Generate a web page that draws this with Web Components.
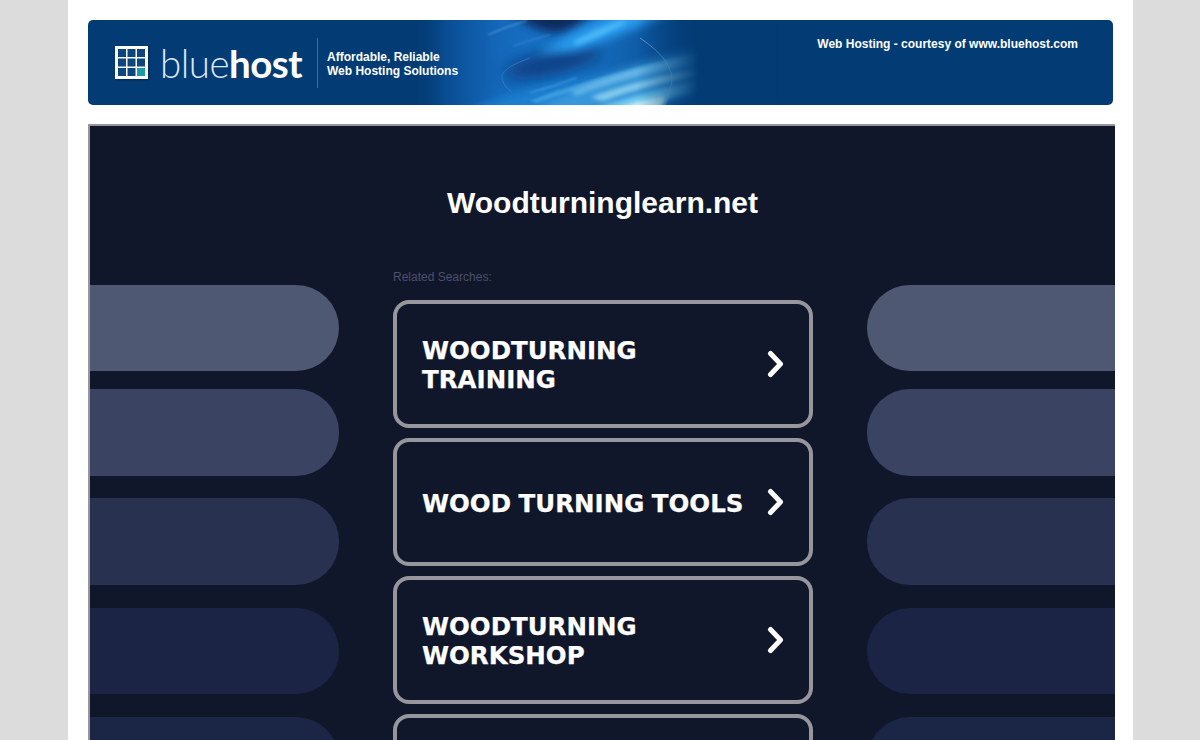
<!DOCTYPE html>
<html>
<head>
<meta charset="utf-8">
<title>Woodturninglearn.net</title>
<style>
  html, body { margin: 0; height: 740px; overflow: hidden; background: #dcdcdc; }
</style>
</head>
<body>
<hosting-page>
  <bluehost-banner></bluehost-banner>
  <parked-frame title-text="Woodturninglearn.net">
    <search-link>WOODTURNING TRAINING</search-link>
    <search-link>WOOD TURNING TOOLS</search-link>
    <search-link>WOODTURNING WORKSHOP</search-link>
    <search-link></search-link>
  </parked-frame>
</hosting-page>

<script>
class HostingPage extends HTMLElement {
  constructor() {
    super();
    this.attachShadow({ mode: "open" });
    this.shadowRoot.innerHTML = `
      <style>
        :host {
          display: flex;
          flex-direction: column;
          box-sizing: border-box;
          width: 1065px;
          height: 740px;
          margin-left: 68px;
          padding: 20px 0 0 20px;
          background: #fff;
          overflow: hidden;
        }
      </style>
      <slot></slot>
    `;
  }
}

class BluehostBanner extends HTMLElement {
  constructor() {
    super();
    this.attachShadow({ mode: "open" });
    this.shadowRoot.innerHTML = `
      <style>
        :host {
          display: flex;
          position: relative;
          flex: none;
          box-sizing: border-box;
          width: 1025px;
          height: 85px;
          border-radius: 5px;
          overflow: hidden;
          background: #033b74;
          font-family: "Liberation Sans", Arial, sans-serif;
          color: #fff;
        }
        .art { position: absolute; left: 0; top: 0; }
        .logo {
          position: relative;
          display: flex;
          align-items: center;
          gap: 12px;
          width: 202px;
          height: 85px;
          padding-left: 27px;
          flex: none;
        }
        .logo svg { filter: drop-shadow(1px 1px 1px rgba(0, 20, 50, .6)); }
        .word {
          font-family: Lato, sans-serif;
          font-size: 38.5px;
          font-weight: 300;
          letter-spacing: -0.5px;
          color: #dce8f2;
          line-height: 1;
          margin-top: 2px;
        }
        .word b { font-weight: 700; color: #fff; }
        .rule {
          position: relative;
          flex: none;
          width: 1px;
          height: 50px;
          margin: 18px 0 0 0;
          background: #3a6f9f;
        }
        .tag {
          position: relative;
          margin: 30px 0 0 9px;
          font-size: 12px;
          font-weight: 700;
          line-height: 14px;
        }
        .courtesy {
          position: absolute;
          right: 35px;
          top: 17px;
          font-size: 12px;
          font-weight: 700;
          line-height: 14px;
        }
      </style>
      <svg class="art" width="1025" height="85" viewBox="0 0 1025 85" aria-hidden="true">
        <defs>
          <linearGradient id="base" x1="0" x2="1" y1="0" y2="0">
            <stop offset="0" stop-color="#033b74"/>
            <stop offset=".14" stop-color="#0a5098"/>
            <stop offset=".3" stop-color="#1468ba"/>
            <stop offset=".55" stop-color="#1a78cc"/>
            <stop offset=".8" stop-color="#0d56a0"/>
            <stop offset="1" stop-color="#033b74"/>
          </linearGradient>
          <linearGradient id="fadeR" x1="0" x2="1" y1="0" y2="0">
            <stop offset="0" stop-color="#033b74" stop-opacity="0"/>
            <stop offset=".85" stop-color="#033b74"/>
          </linearGradient>
          <linearGradient id="fadeL" x1="0" x2="1" y1="0" y2="0">
            <stop offset="0" stop-color="#033b74"/>
            <stop offset="1" stop-color="#033b74" stop-opacity="0"/>
          </linearGradient>
          <filter id="b22" x="-40%" y="-80%" width="180%" height="260%"><feGaussianBlur stdDeviation="22"/></filter>
          <filter id="b14" x="-40%" y="-80%" width="180%" height="260%"><feGaussianBlur stdDeviation="14"/></filter>
          <filter id="b7" x="-30%" y="-60%" width="160%" height="220%"><feGaussianBlur stdDeviation="7"/></filter>
          <filter id="b3" x="-20%" y="-60%" width="140%" height="220%"><feGaussianBlur stdDeviation="3"/></filter>
        </defs>
        <!-- drawn in coordinates of the 3x crop, x from 342 and y from -2 -->
        <g transform="translate(342 -2) scale(.33333)">
          <rect x="-60" y="0" width="900" height="270" fill="url(#base)"/>
          <path d="M230 -30 L500 -30 Q450 35 380 46 Q300 40 230 -30Z" fill="#08295f" filter="url(#b14)"/>
          <ellipse cx="370" cy="135" rx="150" ry="38" transform="rotate(-12 370 135)" fill="#0a3f85" filter="url(#b22)"/>
          <path d="M90 290 Q230 225 400 195 L520 290Z" fill="#1a7fd0" filter="url(#b14)"/>
          <path d="M300 280 Q560 135 860 85 L860 225 Q700 240 660 290Z" fill="#3d9fe0" opacity=".8" filter="url(#b14)"/>
          <path d="M320 105 Q430 45 560 -20 L730 -20 Q560 60 430 98Z" fill="#2a9bee" filter="url(#b14)"/>
          <path d="M430 72 Q500 32 570 10 L595 12 Q520 52 440 82Z" fill="#4cb8f7" filter="url(#b7)"/>
          <path d="M300 248 Q520 165 860 90 L860 104 Q540 180 320 254Z" fill="#4aa6e4" opacity=".7" filter="url(#b3)"/>
          <path d="M420 222 Q580 152 860 104 L860 122 Q600 172 440 232Z" fill="#8fd4f2" opacity=".55" filter="url(#b7)"/>
          <path d="M480 238 Q620 186 860 142 L860 162 Q640 202 520 250Z" fill="#a6e2f7" opacity=".7" filter="url(#b7)"/>
          <path d="M440 290 Q600 228 860 176 L860 210 Q660 240 640 290Z" fill="#72ccf2" opacity=".9" filter="url(#b7)"/>
          <path d="M530 290 Q610 246 710 234 L690 290Z" fill="#c8f1fa" filter="url(#b7)"/>
          <path d="M175 50 Q230 25 290 8" stroke="#7ab6e8" stroke-width="3" fill="none" filter="url(#b3)" opacity=".8"/>
          <path d="M250 85 Q300 66 360 50" stroke="#4f9ade" stroke-width="3" fill="none" filter="url(#b3)" opacity=".7"/>
          <path d="M300 225 Q370 205 440 180" stroke="#4f9fdf" stroke-width="4" fill="none" filter="url(#b3)" opacity=".7"/>
          <path d="M300 120 Q225 145 215 172 Q215 200 245 222" stroke="#5aa5dc" stroke-width="2" fill="none" opacity=".55"/>
          <path d="M630 60 Q735 130 725 195 Q718 235 700 270" stroke="#98d2ef" stroke-width="3" fill="none" opacity=".6"/>
          <rect x="-60" y="0" width="110" height="270" fill="url(#fadeL)"/>
          <rect x="620" y="0" width="220" height="270" fill="url(#fadeR)"/>
          <rect x="839" y="0" width="200" height="270" fill="#033b74"/>
        </g>
      </svg>
      <div class="logo">
        <svg width="33" height="33" viewBox="0 0 33 33" aria-hidden="true">
          <rect width="33" height="33" fill="#fff"/>
          <g fill="#0d467d">
            <rect x="3" y="3" width="8" height="8"/><rect x="12.500" y="3" width="8" height="8"/><rect x="22" y="3" width="8" height="8"/>
            <rect x="3" y="12.500" width="8" height="8"/><rect x="12.500" y="12.500" width="8" height="8"/><rect x="22" y="12.500" width="8" height="8"/>
            <rect x="3" y="22" width="8" height="8"/><rect x="12.500" y="22" width="8" height="8"/>
          </g>
          <rect x="22" y="22" width="8" height="8" fill="#1d9aa8"/>
        </svg>
        <span class="word">blue<b>host</b></span>
      </div>
      <div class="rule"></div>
      <div class="tag">Affordable, Reliable<br>Web Hosting Solutions</div>
      <div class="courtesy">Web Hosting - courtesy of www.bluehost.com</div>
    `;
  }
}

class ParkedFrame extends HTMLElement {
  constructor() {
    super();
    this.attachShadow({ mode: "open" });
    const pills = [
      ["#4f5873", 86, 18], ["#3b4363", 87, 22], ["#283150", 87, 23], ["#1b2444", 86, 23], ["#1b2545", 86, 0]
    ].map(([color, height, gap]) =>
      `<div class="pill" style="background:${color};height:${height}px;margin-bottom:${gap}px"></div>`).join("");
    this.shadowRoot.innerHTML = `
      <style>
        :host {
          display: block;
          box-sizing: border-box;
          flex: none;
          width: 1027px;
          height: 700px;
          margin-top: 19px;
          border-top: 2px solid #96969c;
          border-left: 2px solid #96969c;
          background: #11172b;
        }
        h1 {
          margin: 0;
          padding-top: 59px;
          height: 119px;
          font: 700 30px/36px "Liberation Sans", Arial, sans-serif;
          text-align: center;
          color: #fff;
          box-sizing: border-box;
        }
        .cols {
          display: grid;
          grid-template-columns: 249px 420px 248px;
          column-gap: 54px;
        }
        .side { padding-top: 40px; display: flex; flex-direction: column; }
        .pill { flex: none; }
        .left .pill { border-radius: 0 43px 43px 0; }
        .right .pill { border-radius: 43px 0 0 43px; }
        .label {
          font: 12px/14px "Liberation Sans", Arial, sans-serif;
          color: #4c4f6b;
          margin: 25px 0 16px;
        }
        .links { display: flex; flex-direction: column; gap: 10px; }
      </style>
      <h1>${this.getAttribute("title-text")}</h1>
      <div class="cols">
        <div class="side left">${pills}</div>
        <div>
          <div class="label">Related Searches:</div>
          <div class="links"><slot></slot></div>
        </div>
        <div class="side right">${pills}</div>
      </div>
    `;
  }
}

class SearchLink extends HTMLElement {
  constructor() {
    super();
    this.attachShadow({ mode: "open" });
    this.shadowRoot.innerHTML = `
      <style>
        :host {
          display: flex;
          align-items: center;
          justify-content: space-between;
          box-sizing: border-box;
          height: 128px;
          padding: 0 23px 0 25px;
          border: 4px solid #96969c;
          border-radius: 16px;
          background: #11172b;
          color: #fff;
          font: 700 24.5px/29px "DejaVu Sans", Verdana, sans-serif;
          word-spacing: -1px;
          -webkit-text-stroke: 0.25px #fff;
        }
        .text { max-width: 330px; padding-top: 2px; }
        svg { flex: none; }
      </style>
      <span class="text"><slot></slot></span>
      <svg width="19" height="30" viewBox="0 0 19 30" aria-hidden="true">
        <path d="M3.500 4.500 L13.500 15 L3.500 25.500" fill="none" stroke="#fff" stroke-width="5" stroke-linecap="round" stroke-linejoin="round"/>
      </svg>
    `;
  }
}

customElements.define("hosting-page", HostingPage);
customElements.define("bluehost-banner", BluehostBanner);
customElements.define("parked-frame", ParkedFrame);
customElements.define("search-link", SearchLink);
</script>
</body>
</html>
